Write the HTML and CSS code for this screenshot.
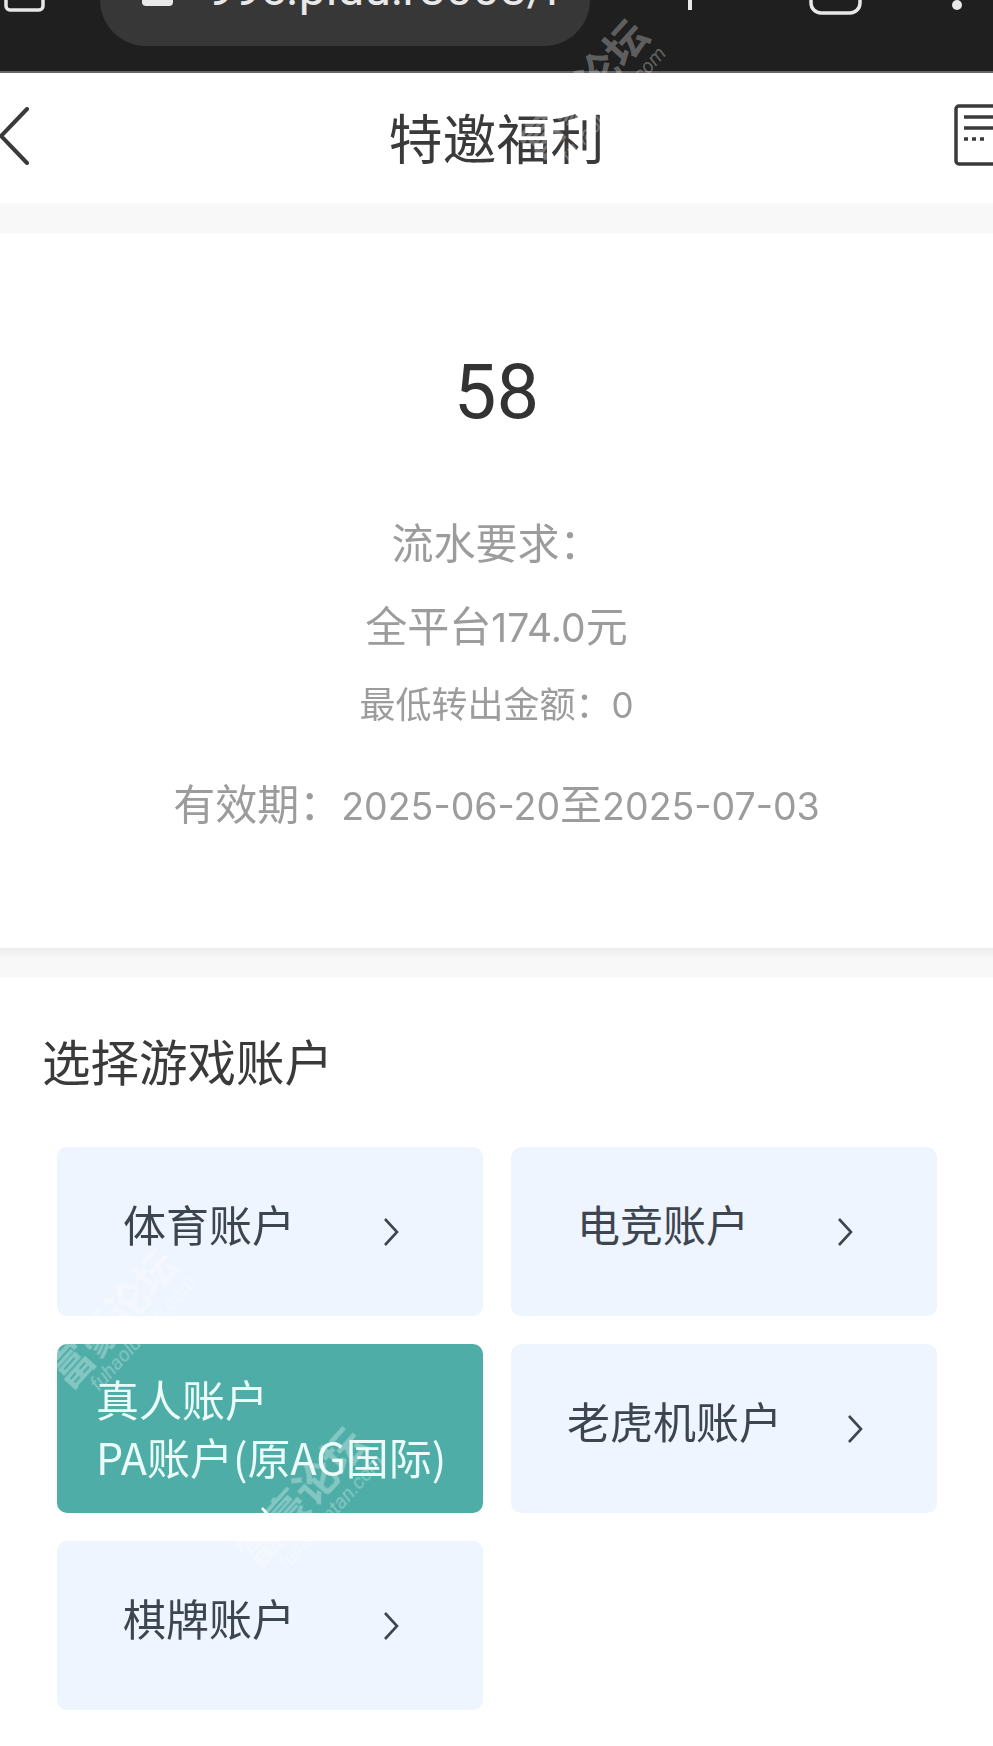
FILE: index.html
```html
<!DOCTYPE html>
<html lang="zh-CN">
<head>
    <meta charset="UTF-8">
    <meta name="viewport" content="width=device-width, initial-scale=1.0">
    <title>特邀福利</title>
    <link rel="stylesheet" href="styles.css">
</head>
<body>
    <div class="page">
        <!-- 浏览器顶栏（截图里上半截被裁掉） -->
        <div class="browser-bar">
            <svg class="bar-home" width="41" height="12" viewBox="0 0 41 12"><path d="M2 -8V6a4 4 0 0 0 4 4H35a4 4 0 0 0 4-4V-8" fill="none" stroke="#e8e8e8" stroke-width="3.5"/></svg>
            <div class="url-pill">
                <svg class="lock" width="31" height="6" viewBox="0 0 31 6"><path d="M0 0H31V2a4 4 0 0 1-4 4H4a4 4 0 0 1-4-4Z" fill="#e8e8e8"/></svg>
                <span class="url-text">99c.pidu:r8008/r</span>
            </div>
            <span class="bar-plus"></span>
            <svg class="bar-tabs" width="53" height="15" viewBox="0 0 53 15"><path d="M2 -8V3a10 10 0 0 0 10 10H41a10 10 0 0 0 10-10V-8" fill="none" stroke="#e8e8e8" stroke-width="3.5"/></svg>
            <span class="bar-dot"></span>
        </div>

        <!-- 标题栏 -->
        <div class="nav">
            <svg class="nav-back" width="30" height="58" viewBox="0 0 30 58"><path d="M27 2L1 29L27 56" fill="none" stroke="#3a3a3a" stroke-width="4" stroke-linecap="round"/></svg>
            <h1 class="nav-title">特邀福利</h1>
            <svg class="nav-list" width="39" height="62" viewBox="0 0 39 62"><rect x="2" y="2" width="60" height="58" rx="3" fill="none" stroke="#3a3a3a" stroke-width="3.5"/><path d="M10 13H39M10 24H39" stroke="#3a3a3a" stroke-width="3.5"/><path d="M10 35H31" stroke="#3a3a3a" stroke-width="3.5" stroke-dasharray="4 4"/></svg>
        </div>
        <div class="band"></div>

        <!-- 福利详情 -->
        <div class="detail">
            <div class="amount">58</div>
            <p class="turnover">流水要求：</p>
            <p class="turnover">全平台<span class="num">174.0</span>元</p>
            <p class="min-out">最低转出金额：<span class="num">0</span></p>
            <p class="valid">有效期：<span class="num">2025-06-20</span>至<span class="num">2025-07-03</span></p>
        </div>
        <div class="band band-shadow"></div>

        <!-- 选择账户 -->
        <div class="accounts">
            <h2 class="accounts-title">选择游戏账户</h2>
            <div class="account-grid">
                <div class="tile">
                    <span class="tile-name">体育账户</span>
                    <svg class="chevron" width="16" height="30" viewBox="0 0 16 30"><path d="M2 2L14 15L2 28" fill="none" stroke="#3d4650" stroke-width="2.6"/></svg>
                </div>
                <div class="tile">
                    <span class="tile-name">电竞账户</span>
                    <svg class="chevron" width="16" height="30" viewBox="0 0 16 30"><path d="M2 2L14 15L2 28" fill="none" stroke="#3d4650" stroke-width="2.6"/></svg>
                </div>
                <div class="tile tile-active">
                    <span class="tile-line">真人账户</span>
                    <span class="tile-line">PA账户(原AG国际)</span>
                    <svg class="chevron-clip" width="16" height="30" viewBox="0 0 16 30"><path d="M2 2L14 15L2 28" fill="none" stroke="#fff" stroke-width="2.6"/></svg>
                </div>
                <div class="tile tile-long">
                    <span class="tile-name">老虎机账户</span>
                    <svg class="chevron" width="16" height="30" viewBox="0 0 16 30"><path d="M2 2L14 15L2 28" fill="none" stroke="#3d4650" stroke-width="2.6"/></svg>
                </div>
                <div class="tile">
                    <span class="tile-name">棋牌账户</span>
                    <svg class="chevron" width="16" height="30" viewBox="0 0 16 30"><path d="M2 2L14 15L2 28" fill="none" stroke="#3d4650" stroke-width="2.6"/></svg>
                </div>
            </div>
        </div>

        <!-- 论坛水印 -->
        <div class="wm wm-top">富豪论坛<small>fuhaoluntan.com</small></div>
        <div class="wm wm-corner">富豪论坛<small>fuhaoluntan.com</small></div>
        <div class="wm wm-active">富豪论坛<small>fuhaoluntan.com</small></div>
    </div>
</body>
</html>
```

FILE: styles.css
```css
body {
    margin: 0;
    background: #fff;
    font-family: "Noto Sans CJK SC", "Noto Sans", sans-serif;
    color: #333;
}
.page {
    position: relative;
    height: 1746px;
    overflow: hidden;
    filter: blur(0.5px);
}

/* 顶栏 */
.browser-bar {
    display: flex;
    align-items: flex-start;
    height: 71px;
    background: #1f1f1f;
    border-bottom: 2px solid #666;
    overflow: hidden;
}
.bar-home {
    margin-left: 4px;
    flex: none;
}
.url-pill {
    display: flex;
    align-items: flex-start;
    flex: none;
    width: 490px;
    height: 46px;
    margin-left: 55px;
    background: #373737;
    border-radius: 0 0 50px 50px;
    overflow: hidden;
}
.lock {
    margin-left: 42px;
    flex: none;
}
.url-text {
    margin: -36px 0 0 34px;
    font-family: "Roboto", sans-serif;
    font-size: 48px;
    line-height: 50px;
    color: #e8e8e8;
    white-space: nowrap;
}
.bar-plus {
    width: 4px;
    height: 10px;
    margin-left: 98px;
    background: #e8e8e8;
    flex: none;
}
.bar-tabs {
    margin-left: 117px;
    flex: none;
}
.bar-dot {
    width: 10px;
    height: 10px;
    margin-left: 90px;
    border-radius: 50%;
    background: #e8e8e8;
    flex: none;
}

/* 标题栏 */
.nav {
    display: grid;
    grid-template-columns: 1fr auto 1fr;
    align-items: center;
    height: 130px;
    background: #fff;
}
.nav-back {
    margin-top: -4px;
}
.nav-title {
    margin: -2px 0 0;
    font-size: 54px;
    font-weight: 400;
    line-height: 126px;
    color: #3a3a3a;
}
.nav-list {
    justify-self: end;
    margin-top: -6px;
}
.band {
    height: 30px;
    background: #f8f8f8;
}
.band-shadow {
    height: 29px;
    background: linear-gradient(#ececec, #f8f8f8 35%);
}

/* 福利详情 */
.detail {
    height: 715px;
    box-sizing: border-box;
    padding-top: 109px;
    text-align: center;
    background: #fff;
}
.amount {
    font-family: "Roboto", sans-serif;
    font-size: 76px;
    line-height: 100px;
    color: #333;
}
.num {
    font-family: "Inter", sans-serif;
}
.turnover {
    margin: 0;
    font-size: 42px;
    line-height: 83px;
    color: #9c9c9c;
}
.turnover .num {
    font-size: 39px;
}
.amount + .turnover {
    margin-top: 57px;
}
.min-out {
    margin: 3px 0 0;
    font-size: 36px;
    line-height: 60px;
    color: #9c9c9c;
}
.min-out .num {
    font-size: 35px;
}
.valid {
    margin: 37px 0 0;
    font-size: 42px;
    line-height: 60px;
    color: #9c9c9c;
}
.valid .num {
    font-size: 37.5px;
}

/* 账户 */
.accounts {
    padding: 45px 56px 0 57px;
}
.accounts-title {
    margin: 0 0 0 -15px;
    font-size: 48.5px;
    font-weight: 400;
    line-height: 76px;
    color: #3a3a3a;
}
.account-grid {
    display: grid;
    grid-template-columns: 1fr 1fr;
    gap: 28px;
    margin-top: 49px;
}
.tile {
    display: flex;
    align-items: center;
    gap: 88px;
    height: 169px;
    padding-left: 66px;
    background: #eff5fe;
    border-radius: 10px;
    overflow: hidden;
}
.tile-long {
    gap: 65px;
    padding-left: 56px;
}
.tile-name {
    margin-bottom: 17px;
    font-size: 43px;
    color: #3d4650;
    white-space: nowrap;
}
.chevron {
    flex: none;
}
.tile-active {
    flex-direction: column;
    align-items: flex-start;
    gap: 0;
    padding: 25px 0 0 39px;
    box-sizing: border-box;
    background: #4fada8;
}
.tile-line {
    font-size: 43px;
    line-height: 58px;
    color: #eafbf8;
    white-space: nowrap;
}
.chevron-clip {
    flex: none;
    margin: 21px 0 0 164px;
}

/* 水印 */
.wm {
    position: absolute;
    width: 220px;
    font-size: 42px;
    font-weight: 700;
    line-height: 46px;
    text-align: center;
    color: rgba(255, 255, 255, 0.3);
    transform: translate(-50%, -50%) rotate(-48deg);
}
.wm small {
    display: block;
    padding-right: 28px;
    font-family: "Roboto", sans-serif;
    font-size: 20px;
    font-style: italic;
    font-weight: 400;
    line-height: 22px;
    text-align: right;
}
.wm-top {
    left: 590px;
    top: 95px;
}
.wm-corner {
    left: 120px;
    top: 1324px;
}
.wm-active {
    left: 308px;
    top: 1503px;
}
```
